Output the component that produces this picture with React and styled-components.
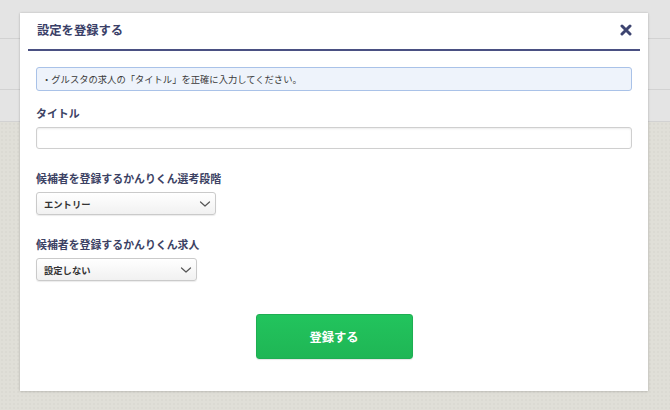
import React from "react";
import styled, { createGlobalStyle } from "styled-components";

const Global = createGlobalStyle`
  html, body { margin: 0; padding: 0; }
  body {
    width: 670px; height: 410px; overflow: hidden;
    font-family: "Noto Sans CJK JP", "Noto Sans", sans-serif;
  }
`;

const Page = styled.div`
  position: relative;
  width: 670px;
  height: 410px;
  display: flex;
  flex-direction: column;
  background: #e0dfd8;
`;

const TopBar = styled.div`
  height: ${(p) => p.$h}px;
  background: #e4e4e4;
  border-bottom: 1px solid #d2d2d2;
  box-sizing: border-box;
`;

const Filler = styled.div`
  flex: 1;
  background-color: #e0dfd8;
  background-image: radial-gradient(rgba(0,0,0,0.025) 1px, transparent 1px);
  background-size: 4px 4px;
`;

const Modal = styled.div`
  position: absolute;
  left: 20px;
  top: 13px;
  width: 628px;
  height: 378px;
  background: #fff;
  box-shadow: 0 0 2px rgba(0,0,0,0.18), 0 1px 3px rgba(0,0,0,0.08);
  padding: 0 8px;
  box-sizing: border-box;
  display: flex;
  flex-direction: column;
`;

const Header = styled.div`
  height: 38px;
  display: flex;
  align-items: center;
  justify-content: space-between;
  border-bottom: 2px solid #4a5082;
  box-sizing: border-box;
  padding: 0 8px 2px 9px;
`;

const Title = styled.h2`
  margin: 0;
  font-size: 12.3px;
  font-weight: 700;
  color: #3a4068;
`;

const Close = styled.button`
  border: 0;
  background: none;
  padding: 0;
  width: 12px;
  height: 12px;
  display: flex;
  align-items: center;
  justify-content: center;
  cursor: pointer;
`;

const Body = styled.div`
  padding: 16px 8px 0;
  display: flex;
  flex-direction: column;
`;

const Notice = styled.div`
  height: 24px;
  box-sizing: border-box;
  border: 1px solid #a9c2e8;
  border-radius: 3px;
  background: #eef3fb;
  display: flex;
  align-items: center;
  padding: 0 5px;
  font-size: 9.3px;
  color: #3a3a3a;
`;

const Label = styled.div`
  margin-top: ${(p) => p.$mt}px;
  font-size: 10.9px;
  font-weight: 700;
  color: #3c4264;
  line-height: 16px;
  height: 16px;
`;

const Input = styled.input`
  margin-top: 6px;
  height: 22px;
  width: 100%;
  box-sizing: border-box;
  border: 1px solid #cfcfcf;
  border-radius: 3px;
  box-shadow: inset 0 1px 2px rgba(0,0,0,0.08);
  background: #fff;
  outline: none;
`;

const Select = styled.div`
  margin-top: 6px;
  width: ${(p) => p.$w}px;
  height: 23px;
  box-sizing: border-box;
  border: 1px solid #cacaca;
  border-radius: 3px;
  background: linear-gradient(#ffffff, #f1f1f1);
  box-shadow: 0 1px 1px rgba(0,0,0,0.08);
  display: flex;
  align-items: center;
  justify-content: space-between;
  padding: 0 4px 0 7px;
  font-size: 9.3px;
  font-weight: 700;
  color: #333;
`;

const Footer = styled.div`
  display: flex;
  justify-content: center;
  margin-top: 33px;
`;

const Submit = styled.button`
  width: 157px;
  height: 45px;
  border: 1px solid #1eae52;
  border-radius: 3px;
  background: linear-gradient(#22c45d, #1fb655);
  color: #fff;
  font-family: inherit;
  font-size: 12.3px;
  font-weight: 700;
  box-shadow: 0 1px 1px rgba(0,0,0,0.1);
  cursor: pointer;
`;

const Chevron = () => (
  <svg width="12" height="8" viewBox="0 0 12 8">
    <path d="M1.5 2 L6 6 L10.5 2" fill="none" stroke="#555" strokeWidth="1.2" strokeLinecap="round" strokeLinejoin="round" />
  </svg>
);

const XIcon = () => (
  <svg width="12" height="12" viewBox="0 0 12 12">
    <path d="M2 2 L10 10 M10 2 L2 10" stroke="#3d4470" strokeWidth="3" strokeLinecap="round" />
  </svg>
);

export default function App() {
  return (
    <>
      <Global />
      <Page>
        <TopBar $h={39} />
        <TopBar $h={51} />
        <TopBar $h={32} />
        <Filler />
        <Modal>
          <Header>
            <Title>設定を登録する</Title>
            <Close aria-label="close"><XIcon /></Close>
          </Header>
          <Body>
            <Notice>・グルスタの求人の「タイトル」を正確に入力してください。</Notice>
            <Label $mt={14}>タイトル</Label>
            <Input type="text" />
            <Label $mt={21}>候補者を登録するかんりくん選考段階</Label>
            <Select $w={180}>
              <span>エントリー</span>
              <Chevron />
            </Select>
            <Label $mt={21}>候補者を登録するかんりくん求人</Label>
            <Select $w={161}>
              <span>設定しない</span>
              <Chevron />
            </Select>
            <Footer>
              <Submit>登録する</Submit>
            </Footer>
          </Body>
        </Modal>
      </Page>
    </>
  );
}
